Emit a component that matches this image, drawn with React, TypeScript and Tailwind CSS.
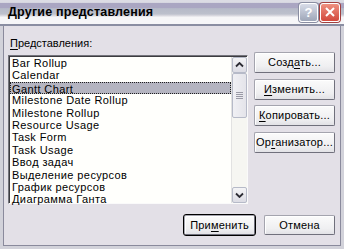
import React from 'react';

const views = [
  'Bar Rollup',
  'Calendar',
  'Gantt Chart',
  'Milestone Date Rollup',
  'Milestone Rollup',
  'Resource Usage',
  'Task Form',
  'Task Usage',
  'Ввод задач',
  'Выделение ресурсов',
  'График ресурсов',
  'Диаграмма Ганта',
];

// label with one underlined accelerator letter
function Accel({ text, at }: { text: string; at: number }) {
  return (
    <span>
      {text.slice(0, at)}
      <span className="underline underline-offset-[2px]">{text[at]}</span>
      {text.slice(at + 1)}
    </span>
  );
}

function XpButton({ children, wide, isDefault }: { children: React.ReactNode; wide?: boolean; isDefault?: boolean }) {
  return (
    <button
      className={
        (wide ? 'w-[81px] h-[21px] ' : 'w-[71px] h-[20px] ') +
        (isDefault ? 'outline outline-1 outline-black ' : '') +
        'rounded-[2px] border border-[#a4a4ae] border-r-[#70707c] border-b-[#70707c] bg-[linear-gradient(#fbfbfb,#efeff1_70%,#e2e2e6)] text-[11px] leading-none tracking-[0.2px] text-black shadow-[inset_1px_1px_0_#ffffff]'
      }
    >
      {children}
    </button>
  );
}

function Chevron({ down }: { down?: boolean }) {
  return (
    <svg width="9" height="6" viewBox="0 0 9 6">
      <path d={down ? 'M1 1.5 L4.5 5 L8 1.5' : 'M1 4.5 L4.5 1 L8 4.5'} fill="none" stroke="#2c2c34" strokeWidth="1.8" />
    </svg>
  );
}

function ScrollBar() {
  return (
    <div className="w-[16px] flex flex-col bg-[#f6f6f2] border-l border-[#e2e2e2]">
      <div className="h-[16px] flex items-center justify-center rounded-[2px] border border-[#b6bac8] bg-[linear-gradient(#f4f4f6,#dcdce4)]">
        <Chevron />
      </div>
      <div className="h-[45px] flex flex-col items-center justify-center gap-[1px] rounded-[2px] border border-[#b6bac8] bg-[linear-gradient(90deg,#f0f0f4,#e4e4ea)]">
        <div className="w-[7px] h-px bg-[#9a9aa6]" />
        <div className="w-[7px] h-px bg-[#9a9aa6]" />
        <div className="w-[7px] h-px bg-[#9a9aa6]" />
        <div className="w-[7px] h-px bg-[#9a9aa6]" />
      </div>
      <div className="flex-1" />
      <div className="h-[16px] flex items-center justify-center rounded-[2px] border border-[#b6bac8] bg-[linear-gradient(#f4f4f6,#dcdce4)]">
        <Chevron down />
      </div>
    </div>
  );
}

export default function App() {
  return (
    <div className="w-[344px] h-[249px] flex flex-col bg-[#d2d2da] font-['Liberation_Sans',Arial,sans-serif] text-black select-none">
      {/* Title bar */}
      <div className="h-[26px] flex items-center pl-[8px] pr-[4px] border-b-2 border-[#8a8ea2] bg-[linear-gradient(#dcdce4_0%,#dcdce4_10%,#aaa6c2_14%,#aaa6c2_32%,#b6bac8_36%,#bcc0cc_58%,#d4d4dc_64%,#f6f6f8_72%,#f6f6f8_100%)]">
        <span className="flex-1 text-[12.5px] font-bold tracking-[0.2px]">Другие представления</span>
        <div className="flex gap-[2px]">
          <div className="w-[19px] h-[19px] rounded-[3px] border border-white bg-[linear-gradient(#d8dce8,#9ea6b8)] flex items-center justify-center text-white text-[13px] font-bold leading-none shadow-[0_0_0_1px_#8a8ea2]">
            ?
          </div>
          <div className="w-[20px] h-[19px] rounded-[3px] border border-white bg-[linear-gradient(#ee9080,#d2483c)] flex items-center justify-center shadow-[0_0_0_1px_#a04040]">
            <svg width="12" height="12" viewBox="0 0 12 12">
              <path d="M2 2 L10 10 M10 2 L2 10" stroke="#ffffff" strokeWidth="2" />
            </svg>
          </div>
        </div>
      </div>

      {/* Body */}
      <div className="flex-1 mx-[3px] mb-[3px] border-x border-b border-[#8a8a9c] bg-[#e3e0e7] pl-[4px] pr-[4px] pt-[11px] flex flex-col">
        <div className="ml-[2px] h-[13px] text-[11px] leading-[13px]">
          <Accel text="Представления:" at={0} />
        </div>
        <div className="mt-[2px] flex gap-[6px]">
          <div className="mt-[3px] w-[240px] h-[149px] flex border border-t-[#74747c] border-l-[#74747c] border-r-[#fafafa] border-b-[#fafafa] shadow-[inset_1px_1px_0_#3c3c40] bg-[#fffffc] pl-px pt-px">
            <div className="flex-1 flex flex-col text-[11px] leading-[12.4px] tracking-[0.4px]">
              {views.map((v) =>
                v === 'Gantt Chart' ? (
                  <div key={v} className="h-[12.4px] pl-[1px] bg-[#b4b4c0] border border-dotted border-[#202020]">
                    {v}
                  </div>
                ) : (
                  <div key={v} className="h-[12.4px] pl-[2px] whitespace-nowrap">
                    {v}
                  </div>
                )
              )}
            </div>
            <ScrollBar />
          </div>
          <div className="flex flex-col gap-[5.5px]">
            <XpButton wide>
              <Accel text="Создать..." at={4} />
            </XpButton>
            <XpButton wide>
              <Accel text="Изменить..." at={0} />
            </XpButton>
            <XpButton wide>
              <Accel text="Копировать..." at={0} />
            </XpButton>
            <XpButton wide>
              <Accel text="Организатор..." at={2} />
            </XpButton>
          </div>
        </div>
        <div className="mt-[11px] flex justify-end gap-[9px] pr-[1px]">
          <XpButton isDefault>
            <Accel text="Применить" at={3} />
          </XpButton>
          <XpButton>Отмена</XpButton>
        </div>
      </div>
    </div>
  );
}
